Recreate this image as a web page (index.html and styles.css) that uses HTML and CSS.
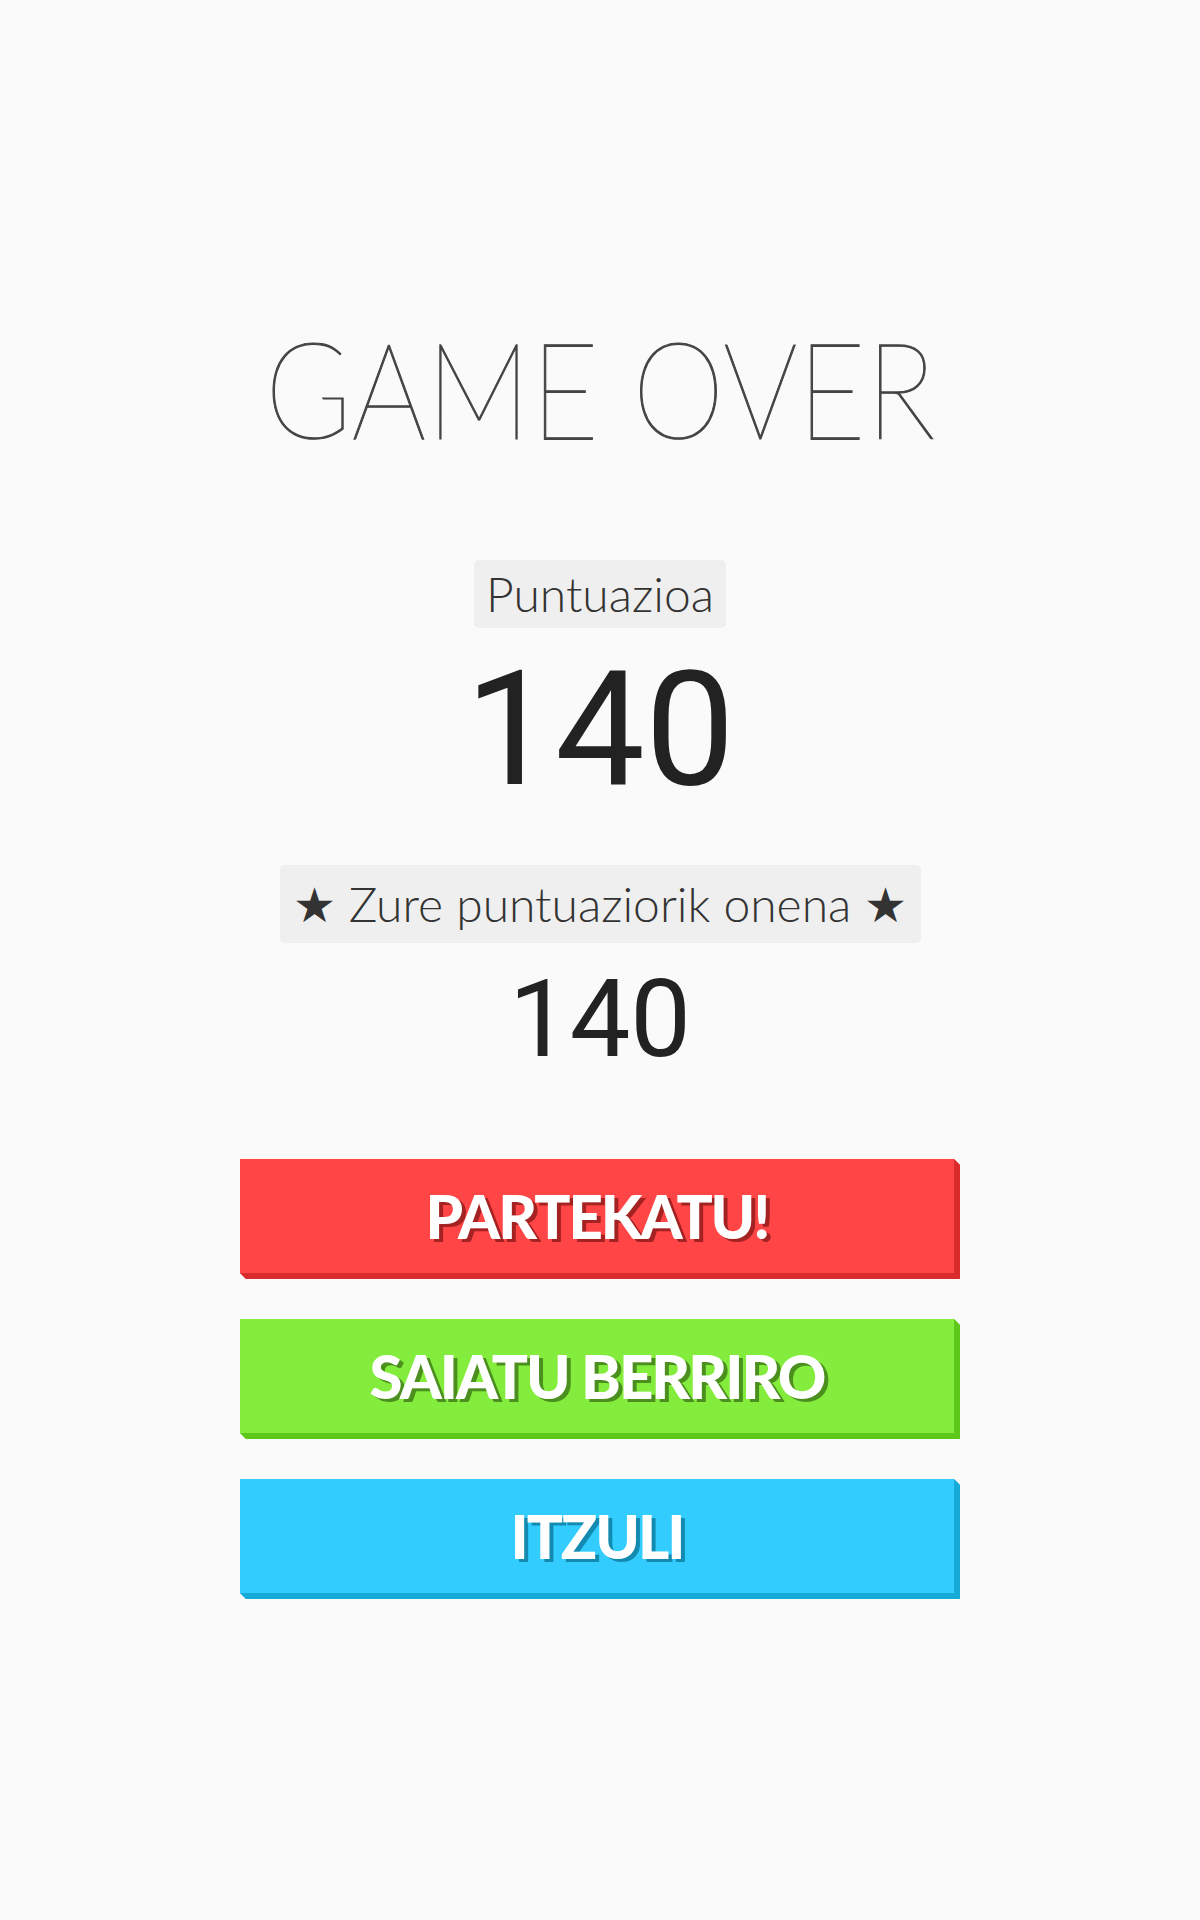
FILE: index.html
```html
<!DOCTYPE html>
<html lang="eu">
<head>
<meta charset="utf-8">
<title>Game Over</title>
<link rel="stylesheet" href="styles.css">
</head>
<body>
<main class="screen">
  <h1 class="title"><span class="title-text">GAME OVER</span></h1>
  <div class="label label-score">Puntuazioa</div>
  <div class="score">140</div>
  <div class="label label-best">★ Zure puntuaziorik onena ★</div>
  <div class="best">140</div>
  <div class="buttons">
    <button class="btn btn-red">PARTEKATU!</button>
    <button class="btn btn-green">SAIATU BERRIRO</button>
    <button class="btn btn-blue">ITZULI</button>
  </div>
</main>
</body>
</html>
```
FILE: styles.css
```css
html, body {
  margin: 0;
  padding: 0;
  background: #fafafa;
}
.screen {
  width: 1200px;
  height: 1920px;
  display: flex;
  flex-direction: column;
  align-items: center;
  box-sizing: border-box;
  padding-top: 318px;
}
.title {
  margin: 0;
  font-family: "Lato", sans-serif;
  font-weight: 100;
  font-size: 134px;
  line-height: 140px;
  color: #444;
  -webkit-text-stroke: 1.2px #444;
}
.title-text {
  display: inline-block;
  transform: scaleX(0.875);
}
.label {
  background: #efefef;
  border-radius: 5px;
  font-family: "Lato", sans-serif;
  font-weight: 300;
  color: #333;
  font-size: 48px;
  line-height: 68px;
  box-sizing: border-box;
  text-align: center;
}
.label-score {
  margin-top: 102px;
  width: 252px;
  height: 68px;
}
.label-best {
  margin-top: 55px;
  width: 641px;
  height: 78px;
  line-height: 78px;
}
.score {
  font-family: "Roboto", sans-serif;
  font-size: 160px;
  line-height: 160px;
  color: #222;
  margin-top: 22px;
}
.best {
  font-family: "Roboto", sans-serif;
  font-size: 108px;
  line-height: 108px;
  color: #222;
  margin-top: 22px;
}
.buttons {
  margin-top: 86px;
  display: flex;
  flex-direction: column;
  gap: 40px;
}
.btn {
  width: 720px;
  height: 120px;
  border: 0;
  border-right: 6px solid;
  border-bottom: 6px solid;
  padding: 0;
  margin: 0;
  font-family: "Lato", sans-serif;
  font-weight: 900;
  font-size: 60px;
  letter-spacing: -2px;
  color: #fff;
  cursor: pointer;
  clip-path: polygon(0 0, calc(100% - 6px) 0, 100% 6px, 100% 100%, 6px 100%, 0 calc(100% - 6px));
}
.btn-red {
  background: #ff4545;
  border-color: #d92b2b;
  text-shadow: 4px 3px 0 #a42222;
}
.btn-green {
  background: #84ec3c;
  border-color: #5ec81a;
  text-shadow: 4px 3px 0 #4b8f1e;
}
.btn-blue {
  background: #33ccff;
  border-color: #16aad6;
  text-shadow: 4px 3px 0 #138bb0;
}
```
